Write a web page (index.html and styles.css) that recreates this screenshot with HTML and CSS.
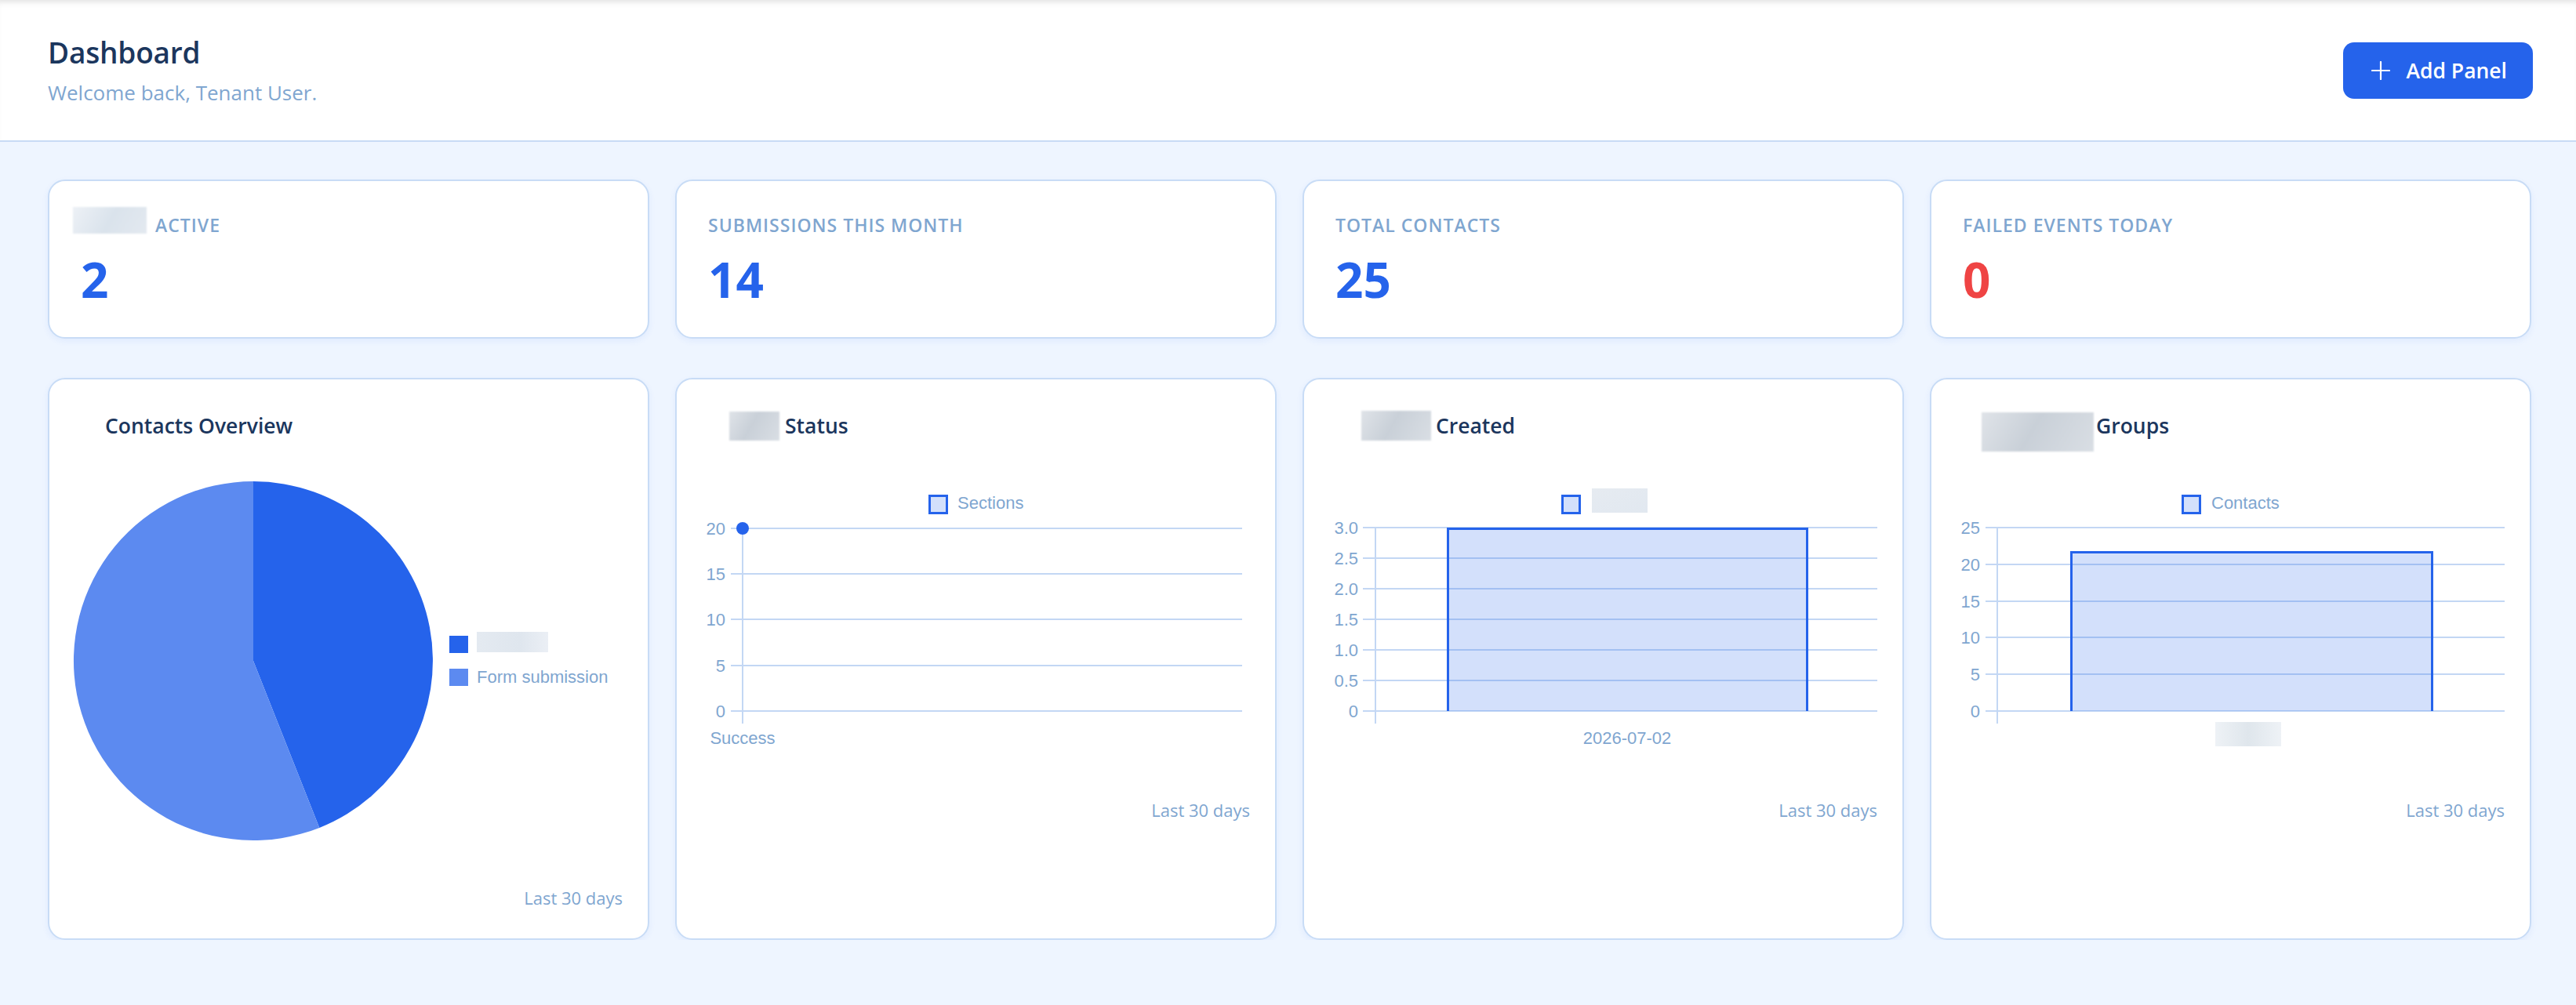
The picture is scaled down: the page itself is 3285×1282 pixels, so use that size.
FILE: index.html
```html
<!DOCTYPE html>
<html lang="en">
<head>
  <meta charset="UTF-8" />
  <meta name="viewport" content="width=device-width, initial-scale=1.0" />
  <title>Dashboard</title>
  <link rel="stylesheet" href="styles.css">
</head>
<body>
  <header class="topbar">
    <div class="heading">
      <h1>Dashboard</h1>
      <p>Welcome back, Tenant User.</p>
    </div>
    <button class="btn-add">
      <svg width="24" height="24" viewBox="0 0 24 24" fill="none" stroke="currentColor" stroke-width="2.2" stroke-linecap="round"><path d="M12 1v22M1 12h22"/></svg>
      Add Panel
    </button>
  </header>

  <main class="content">
    <section class="stats">
      <div class="stat-card">
        <div class="stat-label"><span class="redact redact-stat"></span>Active</div>
        <div class="stat-value">2</div>
      </div>
      <div class="stat-card">
        <div class="stat-label">Submissions this month</div>
        <div class="stat-value">14</div>
      </div>
      <div class="stat-card">
        <div class="stat-label">Total contacts</div>
        <div class="stat-value">25</div>
      </div>
      <div class="stat-card">
        <div class="stat-label">Failed events today</div>
        <div class="stat-value danger">0</div>
      </div>
    </section>

    <section class="panels">
      <!-- pie -->
      <div class="panel">
        <div class="panel-title">Contacts Overview</div>
        <svg class="chart chart-pie" viewBox="0 0 699 472">
          <defs>
            <linearGradient id="blur1" x1="0" y1="0" x2="1" y2="0">
              <stop offset="0" stop-color="#e4eaf1"/>
              <stop offset="0.6" stop-color="#dfe6ee"/>
              <stop offset="1" stop-color="#ebeff5"/>
            </linearGradient>
          </defs>
          <path d="M228 243 L228 14 A229 229 0 0 1 312.3 455.9 Z" fill="#2563eb"/>
          <path d="M228 243 L312.3 455.9 A229 229 0 1 1 228 14 Z" fill="#5c8af0"/>
          <rect x="478" y="211" width="24" height="22" fill="#2563eb"/>
          <rect x="513" y="206" width="91" height="26" fill="url(#blur1)"/>
          <rect x="478" y="253" width="24" height="22" fill="#5c8af0"/>
          <text x="513" y="271" class="axis-text">Form submission</text>
        </svg>
        <div class="panel-foot">Last 30 days</div>
      </div>

      <!-- line -->
      <div class="panel">
        <div class="panel-title"><span class="redact redact-t1"></span>Status</div>
        <svg class="chart" viewBox="0 0 699 360">
          <rect x="290.5" y="32.5" width="22" height="22" fill="#d3e0fb" stroke="#2563eb" stroke-width="3"/>
          <text x="326" y="49" class="axis-text">Sections</text>
          <g stroke="#c3d7f4" stroke-width="2">
            <path d="M37 74H689M37 132H689M37 190H689M37 249H689M37 307H689"/>
            <path d="M52 74V323"/>
          </g>
          <g class="axis-text" text-anchor="end">
            <text x="30" y="82">20</text>
            <text x="30" y="140">15</text>
            <text x="30" y="198">10</text>
            <text x="30" y="257">5</text>
            <text x="30" y="315">0</text>
          </g>
          <text x="52" y="349" class="axis-text" text-anchor="middle">Success</text>
          <circle cx="52" cy="74" r="8" fill="#2563eb"/>
        </svg>
        <div class="panel-foot">Last 30 days</div>
      </div>

      <!-- bar -->
      <div class="panel">
        <div class="panel-title"><span class="redact redact-t2"></span>Created</div>
        <svg class="chart" viewBox="0 0 699 360">
          <defs>
            <linearGradient id="blur2" x1="0" y1="0" x2="1" y2="1">
              <stop offset="0" stop-color="#e6ebf1"/>
              <stop offset="1" stop-color="#e1e8f0"/>
            </linearGradient>
          </defs>
          <rect x="297.5" y="32.5" width="22" height="22" fill="#d3e0fb" stroke="#2563eb" stroke-width="3"/>
          <rect x="335" y="23" width="71" height="31" fill="url(#blur2)"/>
          <g stroke="#c3d7f4" stroke-width="2">
            <path d="M43 73H699M43 112H699M43 151H699M43 190H699M43 229H699M43 268H699M43 307H699"/>
            <path d="M59 73V323"/>
          </g>
          <g class="axis-text" text-anchor="end">
            <text x="37" y="81">3.0</text>
            <text x="37" y="120">2.5</text>
            <text x="37" y="159">2.0</text>
            <text x="37" y="198">1.5</text>
            <text x="37" y="237">1.0</text>
            <text x="37" y="276">0.5</text>
            <text x="37" y="315">0</text>
          </g>
          <rect x="150" y="73" width="461" height="234" fill="rgba(37,99,235,0.2)"/>
          <path d="M151.5 307V74.5H609.5V307" fill="none" stroke="#2563eb" stroke-width="3"/>
          <text x="380" y="349" class="axis-text" text-anchor="middle">2026-07-02</text>
        </svg>
        <div class="panel-foot">Last 30 days</div>
      </div>

      <!-- bar -->
      <div class="panel">
        <div class="panel-title"><span class="redact redact-t3"></span>Groups</div>
        <svg class="chart" viewBox="0 0 699 360">
          <defs>
            <linearGradient id="blur3" x1="0" y1="0" x2="1" y2="0">
              <stop offset="0" stop-color="#eef2f6"/>
              <stop offset="0.5" stop-color="#dfe6ec"/>
              <stop offset="1" stop-color="#eef2f6"/>
            </linearGradient>
          </defs>
          <rect x="288.5" y="32.5" width="22" height="22" fill="#d3e0fb" stroke="#2563eb" stroke-width="3"/>
          <text x="325" y="49" class="axis-text">Contacts</text>
          <g stroke="#c3d7f4" stroke-width="2">
            <path d="M37 73H699M37 120H699M37 167H699M37 213H699M37 260H699M37 307H699"/>
            <path d="M52 73V323"/>
          </g>
          <g class="axis-text" text-anchor="end">
            <text x="30" y="81">25</text>
            <text x="30" y="128">20</text>
            <text x="30" y="175">15</text>
            <text x="30" y="221">10</text>
            <text x="30" y="268">5</text>
            <text x="30" y="315">0</text>
          </g>
          <rect x="145" y="103" width="463" height="204" fill="rgba(37,99,235,0.2)"/>
          <path d="M146.5 307V104.5H606.5V307" fill="none" stroke="#2563eb" stroke-width="3"/>
          <rect x="330" y="321" width="84" height="31" fill="url(#blur3)"/>
        </svg>
        <div class="panel-foot">Last 30 days</div>
      </div>
    </section>
  </main>
</body>
</html>
```

FILE: styles.css
```css
body {
  margin: 0;
  background: #eef5ff;
  color: #1b365d;
  font-family: "Open Sans", "Noto Sans", sans-serif;
}
.topbar {
  height: 179px;
  background: #fff;
  border-bottom: 2px solid #c8dbf5;
  box-shadow: inset 0 8px 8px -6px rgba(0, 0, 0, 0.13);
  display: flex;
  align-items: center;
  justify-content: space-between;
  padding: 0 55px 0 61px;
}
.heading h1 {
  margin: 0 0 11px;
  font-size: 37px;
  line-height: 46px;
  font-weight: 600;
  letter-spacing: -0.2px;
  color: #1b365d;
}
.heading p {
  margin: 0;
  font-size: 26px;
  line-height: 34px;
  color: #7fa6d0;
}
.btn-add {
  height: 72px;
  display: flex;
  align-items: center;
  gap: 20px;
  padding: 0 33px 0 36px;
  border: none;
  border-radius: 14px;
  background: #2563eb;
  color: #fff;
  font-family: inherit;
  font-size: 26.5px;
  font-weight: 600;
  cursor: pointer;
}
.content {
  padding: 48px 57px 0 61px;
}
.stats, .panels {
  display: grid;
  grid-template-columns: repeat(4, 1fr);
  gap: 33px;
}
.stats {
  margin-bottom: 50px;
}
.stat-card, .panel {
  background: #fff;
  border: 2px solid #c8dcf6;
  border-radius: 22px;
  box-shadow: 0 3px 8px rgba(37, 99, 235, 0.07);
}
.stat-card {
  padding: 41px 40px 38px;
}
.stat-label {
  display: flex;
  align-items: center;
  gap: 11px;
  font-size: 23px;
  line-height: 30px;
  font-weight: 600;
  letter-spacing: 1px;
  text-transform: uppercase;
  color: #7fa6d0;
}
.stat-value {
  margin-top: 18px;
  font-size: 62px;
  line-height: 72px;
  font-weight: 700;
  color: #2563eb;
}
.stat-value.danger {
  color: #ef4444;
}
.panel {
  padding: 41px 32px 37px;
}
.panel-title {
  height: 36px;
  display: flex;
  align-items: center;
  margin-left: 39px;
  font-size: 26.5px;
  font-weight: 600;
  color: #1b365d;
}
.chart {
  display: block;
  width: 100%;
  height: 360px;
  margin-top: 39px;
  overflow: visible;
}
.chart-pie {
  height: 472px;
}
.axis-text {
  font-family: "Liberation Sans", Arial, sans-serif;
  font-size: 22px;
  fill: #7fa6d0;
}
.panel-foot {
  margin-top: 58px;
  text-align: right;
  font-size: 22px;
  line-height: 30px;
  color: #7fa6d0;
}
.redact {
  display: inline-block;
  flex: none;
  background: linear-gradient(120deg, #dfe3e8, #c9d0d8 45%, #d9dee4);
  filter: blur(1px);
}
.redact-stat {
  width: 94px;
  height: 34px;
  margin: -12px 0 0 -10px;
  background: linear-gradient(120deg, #edf1f6, #dae3ec 50%, #e3e9f0);
}
.redact-t1 {
  width: 64px;
  height: 37px;
  margin: 0 7px 0 -4px;
}
.redact-t2 {
  width: 89px;
  height: 38px;
  margin: 0 6px 0 2px;
}
.redact-t3 {
  width: 143px;
  height: 50px;
  margin: 16px 3px 0 -7px;
}
```
